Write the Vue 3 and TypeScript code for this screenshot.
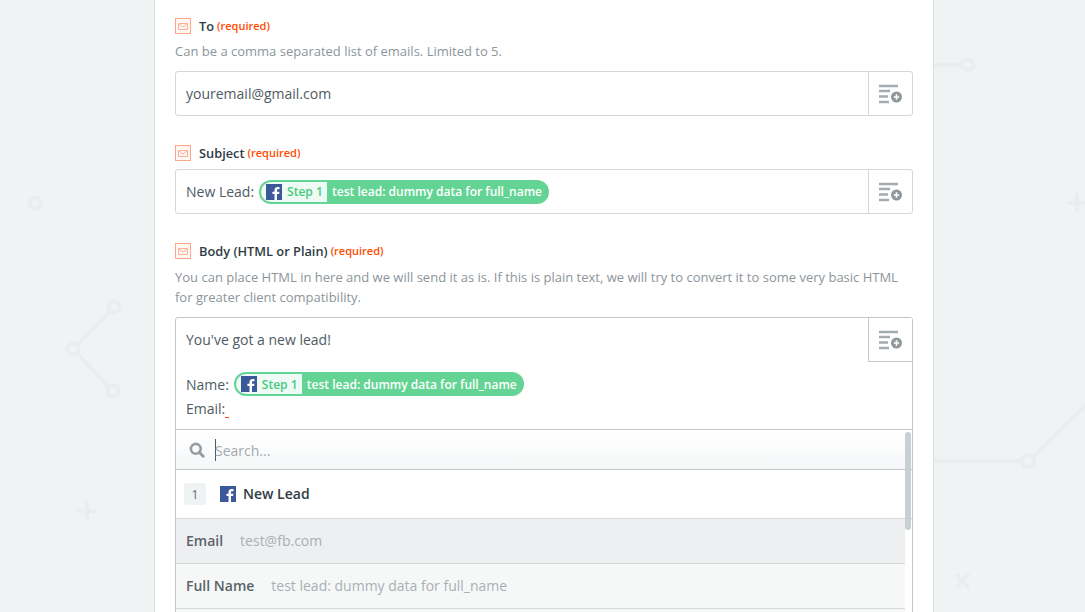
<template>
  <div class="page">
    <svg class="page__bg" width="1085" height="612" viewBox="0 0 1085 612" fill="none" stroke="#e9eded" stroke-width="4" stroke-linecap="round">
      <circle cx="35.5" cy="203.5" r="5.5" />
      <path d="M77 345 L110 311 M77 353 L109 387" />
      <circle cx="114" cy="307" r="5.5" />
      <circle cx="73" cy="349" r="5.5" />
      <circle cx="113" cy="391" r="5.5" />
      <path d="M79 511 H95 M87 503 V519" />
      <path d="M933 65 H961" />
      <ellipse cx="967.5" cy="65" rx="6" ry="5" />
      <path d="M1069 203 H1085 M1077 195 V210" />
      <path d="M933 461 H1021 M1034 456 L1087 404" />
      <circle cx="1028" cy="461" r="6" />
      <path d="M957 575 L968 587 M968 575 L957 587" />
    </svg>

    <main class="card">
      <section class="field">
        <div class="field__label">
          <svg class="app-icon" width="16" height="16" viewBox="0 0 16 16" fill="none">
            <rect x="0.5" y="0.5" width="15" height="15" fill="#fff7f3" stroke="#ffa586" />
            <path d="M3.500 5.500 H12.500 V11.500 H3.500 Z M4 6 L8 9 L12 6" stroke="#ffb094" />
          </svg>
          <strong>To</strong>
          <span class="required">(required)</span>
        </div>
        <p class="field__help">Can be a comma separated list of emails. Limited to 5.</p>
        <div class="input">
          <div class="input__text">youremail@gmail.com</div>
          <button class="input__btn" type="button">
            <svg width="24" height="20" viewBox="1 0 24 20" fill="none">
              <path d="M1 2 H20 M1 7 H12 M1 12.500 H10 M1 18 H11" stroke="#a5acb0" stroke-width="2.400" />
              <circle cx="18.500" cy="13" r="5.500" fill="#8f979c" />
              <path d="M15.800 13 H21.200 M18.500 10.300 V15.700" stroke="#fff" stroke-width="1.600" />
            </svg>
          </button>
        </div>
      </section>

      <section class="field">
        <div class="field__label">
          <svg class="app-icon" width="16" height="16" viewBox="0 0 16 16" fill="none">
            <rect x="0.5" y="0.5" width="15" height="15" fill="#fff7f3" stroke="#ffa586" />
            <path d="M3.500 5.500 H12.500 V11.500 H3.500 Z M4 6 L8 9 L12 6" stroke="#ffb094" />
          </svg>
          <strong>Subject</strong>
          <span class="required">(required)</span>
        </div>
        <div class="input input--tight">
          <div class="input__text">
            <span>New Lead:</span>
            <span class="pill">
              <span class="pill__step">
                <svg class="fb" width="16" height="16" viewBox="0 0 16 16">
                  <rect width="16" height="16" fill="#3b5998" />
                  <path d="M11 16 V10 H13.100 L13.400 7.700 H11 V6.300 C11 5.600 11.200 5.200 12.200 5.200 H13.500 V3.100 C13.300 3.100 12.500 3 11.600 3 C9.700 3 8.500 4.100 8.500 6.100 V7.700 H6.400 V10 H8.500 V16 Z" fill="#fff" />
                </svg>
                Step 1
              </span>
              <span class="pill__text">test lead: dummy data for full_name</span>
            </span>
          </div>
          <button class="input__btn" type="button">
            <svg width="24" height="20" viewBox="1 0 24 20" fill="none">
              <path d="M1 2 H20 M1 7 H12 M1 12.500 H10 M1 18 H11" stroke="#a5acb0" stroke-width="2.400" />
              <circle cx="18.500" cy="13" r="5.500" fill="#8f979c" />
              <path d="M15.800 13 H21.200 M18.500 10.300 V15.700" stroke="#fff" stroke-width="1.600" />
            </svg>
          </button>
        </div>
      </section>

      <section class="field">
        <div class="field__label">
          <svg class="app-icon" width="16" height="16" viewBox="0 0 16 16" fill="none">
            <rect x="0.5" y="0.5" width="15" height="15" fill="#fff7f3" stroke="#ffa586" />
            <path d="M3.500 5.500 H12.500 V11.500 H3.500 Z M4 6 L8 9 L12 6" stroke="#ffb094" />
          </svg>
          <strong>Body (HTML or Plain)</strong>
          <span class="required">(required)</span>
        </div>
        <p class="field__help field__help--body">
          You can place HTML in here and we will send it as is. If this is plain text, we will try to convert it to some very basic HTML
          for greater client compatibility.
        </p>

        <div class="editor">
          <button class="editor__btn" type="button">
            <svg width="24" height="20" viewBox="1 0 24 20" fill="none">
              <path d="M1 2 H20 M1 7 H12 M1 12.500 H10 M1 18 H11" stroke="#a5acb0" stroke-width="2.400" />
              <circle cx="18.500" cy="13" r="5.500" fill="#8f979c" />
              <path d="M15.800 13 H21.200 M18.500 10.300 V15.700" stroke="#fff" stroke-width="1.600" />
            </svg>
          </button>
          <div class="editor__body">
            <div class="editor__line">You've got a new lead!</div>
            <div class="editor__line editor__line--name">
              <span>Name:</span>
              <span class="pill">
                <span class="pill__step">
                  <svg class="fb" width="16" height="16" viewBox="0 0 16 16">
                    <rect width="16" height="16" fill="#3b5998" />
                    <path d="M11 16 V10 H13.100 L13.400 7.700 H11 V6.300 C11 5.600 11.200 5.200 12.200 5.200 H13.500 V3.100 C13.300 3.100 12.500 3 11.600 3 C9.700 3 8.500 4.100 8.500 6.100 V7.700 H6.400 V10 H8.500 V16 Z" fill="#fff" />
                  </svg>
                  Step 1
                </span>
                <span class="pill__text">test lead: dummy data for full_name</span>
              </span>
            </div>
            <div class="editor__line editor__line--email">Email:<span class="squiggle"></span></div>
          </div>

          <div class="picker">
            <div class="picker__search">
              <svg width="16" height="16" viewBox="0 0 16 16" fill="none">
                <circle cx="6.800" cy="6.800" r="4.900" stroke="#959da2" stroke-width="2.600" />
                <path d="M10.300 10.300 L14.200 14.200" stroke="#959da2" stroke-width="3" stroke-linecap="round" />
              </svg>
              <span class="picker__caret"></span>
              <span class="picker__placeholder">Search...</span>
            </div>
            <div class="picker__step">
              <span class="picker__num">1</span>
              <svg class="fb" width="16" height="16" viewBox="0 0 16 16">
                <rect width="16" height="16" fill="#3b5998" />
                <path d="M11 16 V10 H13.100 L13.400 7.700 H11 V6.300 C11 5.600 11.200 5.200 12.200 5.200 H13.500 V3.100 C13.300 3.100 12.500 3 11.600 3 C9.700 3 8.500 4.100 8.500 6.100 V7.700 H6.400 V10 H8.500 V16 Z" fill="#fff" />
              </svg>
              <strong>New Lead</strong>
            </div>
            <div v-for="row in rows" :key="row.name" class="picker__row" :class="{ 'picker__row--active': row.active }">
              <strong>{{ row.name }}</strong>
              <span>{{ row.value }}</span>
            </div>
            <div class="picker__row"></div>
            <div class="picker__thumb"></div>
          </div>
        </div>
      </section>
    </main>
  </div>
</template>

<script setup lang="ts">
interface PickerRow {
  name: string;
  value: string;
  active: boolean;
}

const rows: PickerRow[] = [
  { name: 'Email', value: 'test@fb.com', active: true },
  { name: 'Full Name', value: 'test lead: dummy data for full_name', active: false },
];
</script>

<style>
html,
body {
  margin: 0;
  overflow: hidden;
}
</style>

<style scoped>
.page {
  position: relative;
  height: 612px;
  overflow: hidden;
  background: #eff3f4;
  font-family: "Open Sans", "Liberation Sans", sans-serif;
  color: #4f5b63;
}
.page__bg {
  position: absolute;
  top: 0;
  left: 0;
}
.card {
  position: relative;
  box-sizing: border-box;
  width: 780px;
  height: 800px;
  margin-left: 154px;
  padding: 16px 20px 0;
  background: #fff;
  border-left: 1px solid #dde1e4;
  border-right: 1px solid #dde1e4;
}
.field {
  margin-bottom: 27px;
}
.field__label {
  display: flex;
  align-items: center;
  height: 20px;
  font-size: 12.800px;
  color: #2f3c45;
}
.field__label strong {
  margin-left: 8px;
  font-weight: 600;
}
.required {
  margin: 0 0 2px 3px;
  font-size: 11px;
  font-weight: 600;
  color: #ff4a00;
}
.field__help {
  margin: 5px 0 10px;
  font-size: 13px;
  line-height: 20px;
  color: #8c959b;
}
.field__help--body {
  margin-top: 6px;
}
.input {
  display: flex;
  box-sizing: border-box;
  height: 45px;
  border: 1px solid #d5d8da;
  border-radius: 3px;
  background: #fff;
}
.input--tight {
  margin-top: 6px;
}
.input__text {
  flex: 1;
  display: flex;
  align-items: center;
  gap: 5px;
  padding-left: 10px;
  font-size: 14px;
}
.input__btn {
  display: flex;
  align-items: center;
  justify-content: center;
  width: 44px;
  padding: 0;
  border: 0;
  border-left: 1px solid #d5d8da;
  background: transparent;
}
.pill {
  display: inline-flex;
  align-items: center;
  box-sizing: border-box;
  height: 24px;
  padding: 0 7px 0 2px;
  border-radius: 12px;
  background: #63d493;
  color: #fff;
  font-size: 12px;
  font-weight: 600;
  white-space: nowrap;
}
.pill__step {
  display: inline-flex;
  align-items: center;
  gap: 5px;
  box-sizing: border-box;
  height: 20px;
  width: 66px;
  margin-right: 5px;
  padding-left: 5px;
  border-radius: 10px 0 0 10px;
  background: #f0faf4;
  color: #45cc82;
}
.fb {
  flex: none;
}
.editor {
  position: relative;
  box-sizing: border-box;
  border: 1px solid #c4c7c9;
  border-radius: 3px 3px 0 0;
  background: #fff;
}
.editor__btn {
  position: absolute;
  top: 0;
  right: 0;
  display: flex;
  align-items: center;
  justify-content: center;
  box-sizing: border-box;
  width: 44px;
  height: 44px;
  padding: 0;
  border: 0;
  border-left: 1px solid #c4c7c9;
  border-bottom: 1px solid #c4c7c9;
  background: #fff;
}
.editor__body {
  box-sizing: border-box;
  height: 111px;
  padding: 11px 10px 0;
  font-size: 14px;
}
.editor__line {
  display: flex;
  align-items: center;
  height: 20px;
}
.editor__line--name {
  gap: 5px;
  height: 24px;
  margin-top: 23px;
}
.editor__line--email {
  margin-top: 2px;
}
.squiggle {
  align-self: flex-end;
  width: 4px;
  height: 1px;
  background: #ff4a00;
}
.picker {
  position: relative;
  border-top: 1px solid #c4c7c9;
}
.picker__search {
  display: flex;
  align-items: center;
  box-sizing: border-box;
  height: 40px;
  padding-left: 13px;
  border-bottom: 1px solid #c4c7c9;
  background: linear-gradient(#ffffff, #f5f7f8);
  font-size: 14px;
  color: #a3abb0;
}
.picker__caret {
  width: 1px;
  height: 22px;
  margin-left: 10px;
  background: #4f5b63;
}
.picker__placeholder {
  margin-left: -1px;
  padding-top: 2px;
}
.picker__step {
  display: flex;
  align-items: center;
  box-sizing: border-box;
  height: 49px;
  padding-left: 8px;
  font-size: 14px;
  color: #2f3c45;
  border-bottom: 1px solid #d5dade;
}
.picker__step strong {
  margin-left: 7px;
  margin-bottom: 2px;
  font-weight: 600;
}
.picker__num {
  display: flex;
  align-items: center;
  justify-content: center;
  width: 22px;
  height: 22px;
  margin-right: 14px;
  border-radius: 3px;
  background: #eff3f4;
  font-size: 12px;
  color: #5e6a72;
}
.picker__row {
  display: flex;
  align-items: center;
  gap: 17px;
  box-sizing: border-box;
  height: 45px;
  margin-right: 7px;
  padding: 0 0 2px 10px;
  border-bottom: 1px solid #d5dade;
  background: #f6f8f8;
  font-size: 14px;
  color: #a9b0b5;
}
.picker__row--active {
  background: #eeeff1;
}
.picker__row strong {
  font-weight: 600;
  color: #5a6369;
}
.picker__thumb {
  position: absolute;
  top: 2px;
  right: 1px;
  width: 6px;
  height: 98px;
  border-radius: 3px;
  background: #c9d0d3;
}
</style>
